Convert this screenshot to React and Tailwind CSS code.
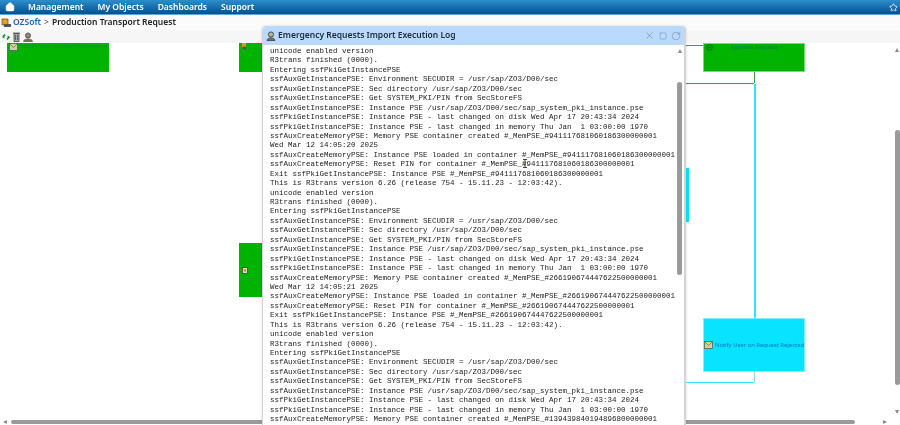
import { Home, Star, X, Square, RotateCw } from 'lucide-react';

const block = (id, date) => [
  'Entering ssfPkiGetInstancePSE',
  'ssfAuxGetInstancePSE: Environment SECUDIR = /usr/sap/ZO3/D00/sec',
  'ssfAuxGetInstancePSE: Sec directory /usr/sap/ZO3/D00/sec',
  'ssfAuxGetInstancePSE: Get SYSTEM_PKI/PIN from SecStoreFS',
  'ssfAuxGetInstancePSE: Instance PSE /usr/sap/ZO3/D00/sec/sap_system_pki_instance.pse',
  'ssfPkiGetInstancePSE: Instance PSE - last changed on disk Wed Apr 17 20:43:34 2024',
  'ssfPkiGetInstancePSE: Instance PSE - last changed in memory Thu Jan  1 03:00:00 1970',
  `ssfAuxCreateMemoryPSE: Memory PSE container created #_MemPSE_#${id}`,
  ...(date
    ? [
        date,
        `ssfAuxCreateMemoryPSE: Instance PSE loaded in container #_MemPSE_#${id}`,
        `ssfAuxCreateMemoryPSE: Reset PIN for container #_MemPSE_#${id}`,
        `Exit ssfPkiGetInstancePSE: Instance PSE #_MemPSE_#${id}`,
        'This is R3trans version 6.26 (release 754 - 15.11.23 - 12:03:42).',
        'unicode enabled version',
        'R3trans finished (0000).',
      ]
    : []),
];

const logLines = [
  'unicode enabled version',
  'R3trans finished (0000).',
  ...block('941117681060186300000001', 'Wed Mar 12 14:05:20 2025'),
  ...block('266190674447622500000001', 'Wed Mar 12 14:05:21 2025'),
  ...block('139439840194896800000001'),
];

const navItems = ['Management', 'My Objects', 'Dashboards', 'Support'];

function MailIcon() {
  return (
    <svg width="9" height="8" viewBox="0 0 9 8" className="shrink-0">
      <rect x="0.5" y="0.5" width="8" height="7" fill="#d8cf9a" stroke="#555" strokeWidth="0.7" />
      <path d="M1 1l3.5 3.5L8 1" fill="none" stroke="#4a8a4a" strokeWidth="0.8" />
    </svg>
  );
}

function ToolbarIcons() {
  return (
    <div className="flex h-[13px] items-center gap-[3px] pl-[2px]">
      <svg width="8" height="10" viewBox="0 0 8 10">
        <path d="M0 5l2.400-3.200 1.200 1.700-1.200.7v2.300zM8 5L5.600 8.200 4.400 6.500l1.200-.7V3.500z" fill="#1f8a2c" />
      </svg>
      <svg width="7" height="10" viewBox="0 0 7 10">
        <rect x="1" y="1.500" width="5" height="8" fill="#a9a9a9" stroke="#444" strokeWidth="0.8" />
        <path d="M0 1h7M2.500 3v5M4.500 3v5" stroke="#444" strokeWidth="0.7" />
      </svg>
      <svg width="10" height="10" viewBox="0 0 10 10">
        <circle cx="5" cy="3.500" r="2.600" fill="#8c8570" stroke="#444" strokeWidth="0.7" />
        <path d="M0.500 9.500c0-3.500 9-3.500 9 0z" fill="#77715f" stroke="#444" strokeWidth="0.6" />
      </svg>
    </div>
  );
}

function Node({ className, children }) {
  return <div className={`absolute flex ${className}`}>{children}</div>;
}

export default function App() {
  return (
    <div className="relative flex h-[425px] w-[900px] flex-col overflow-hidden bg-white font-['Noto_Sans','Liberation_Sans',sans-serif] blur-[0.35px]">
      <header className="flex h-[15px] shrink-0 items-center justify-between border-b border-[#5aa7dc] bg-gradient-to-b from-[#2b8fcb] to-[#04518f] text-white">
        <nav className="flex items-center">
          <Home size={10} fill="white" strokeWidth={2} className="ml-[5px] mr-[13px]" />
          <div className="flex gap-[14px] text-[8.5px] font-semibold leading-none">
            {navItems.map((item) => (
              <span key={item}>{item}</span>
            ))}
          </div>
        </nav>
        <Star size={9} strokeWidth={2} className="mr-[2px]" />
      </header>

      <div className="flex h-[15px] shrink-0 items-center bg-[#fbfbfb] pl-[1px] text-[8.5px] font-semibold leading-none">
        <svg width="11" height="10" viewBox="0 0 11 10" className="mr-[1px]">
          <rect x="1" y="1" width="6" height="6" fill="#e8a020" stroke="#6b4a10" strokeWidth="0.7" />
          <rect x="3" y="6" width="7" height="3" fill="#555" />
        </svg>
        <span className="text-[#1d62b8]">OZSoft</span>
        <span className="mx-[3px] font-normal text-[#444]">&gt;</span>
        <span className="text-[#222]">Production Transport Request</span>
      </div>

      <div className="h-[13px] shrink-0 bg-[#f6f6f6]">
        <ToolbarIcons />
      </div>

      <main className="relative flex-1">
        <Node className="left-[7px] top-0 h-[29px] w-[102px] items-start bg-[#00b300] pl-[2px] text-[5.9px] leading-[7px] text-[#0a8f3a]">
          <MailIcon />
          <span className="ml-[3px] whitespace-nowrap">Notify User on Alert Processing</span>
        </Node>
        <Node className="left-[239px] top-0 h-[29px] w-[30px] items-start bg-[#00b300] pl-[2px]">
          <svg width="7" height="7" viewBox="0 0 7 7">
            <rect x="1" y="0" width="4" height="4" fill="#e8931e" />
            <circle cx="3.500" cy="5" r="1.800" fill="#555" />
          </svg>
        </Node>
        <Node className="left-[239px] top-[200px] h-[54px] w-[30px] items-center bg-[#00b300] pl-[3px]">
          <svg width="6" height="7" viewBox="0 0 6 7">
            <rect x="0.400" y="0.400" width="5.200" height="6.200" fill="#ddd8c0" stroke="#333" strokeWidth="0.7" />
            <rect x="2" y="2.500" width="2" height="2" fill="#c9742a" />
          </svg>
        </Node>
        <Node className="left-[685px] top-[125px] h-[54px] w-[4px] bg-[#08e4ff]" />
        <Node className="left-[703px] top-0 h-[29px] w-[102px] items-start justify-center border border-[#6fe06f] bg-[#00b300] text-[5.9px] leading-[7px] text-[#0a7a5a]">
          <svg width="7" height="7" viewBox="0 0 7 7" className="absolute left-[2px] top-0">
            <circle cx="3.500" cy="3.500" r="2.800" fill="none" stroke="#14503a" strokeWidth="0.8" />
            <path d="M2 3.500h3" stroke="#14503a" strokeWidth="0.7" />
          </svg>
          <span className="whitespace-nowrap">Approve Request</span>
        </Node>
        <Node className="left-[703px] top-[275px] h-[54px] w-[102px] items-center justify-center gap-[2px] border border-[#7ff0ff] bg-[#08e4ff] text-[5.9px] leading-[7px] text-[#0a72c8]">
          <MailIcon />
          <span className="whitespace-nowrap">Notify User on Request Rejected</span>
        </Node>

        {/* connectors */}
        <div className="absolute left-[685px] top-[2px] h-[1px] w-[18px] bg-[#3f9a4f]" />
        <div className="absolute left-[685px] top-[40px] h-[1px] w-[69px] bg-[#3f9a4f]" />
        <div className="absolute left-[754px] top-[29px] h-[11px] w-[1px] bg-[#3f9a4f]" />
        <div className="absolute left-[754px] top-[41px] h-[234px] w-[2px] bg-[#30e4ff]" />
        <div className="absolute left-[754px] top-[329px] h-[10px] w-[1px] bg-[#8fd8e0]" />
        <div className="absolute left-[685px] top-[339px] h-[1px] w-[69px] bg-[#30e4ff]" />

        {/* outer scrollbars */}
        <div className="absolute right-0 top-0 h-[375px] w-[6px]">
          <div className="absolute left-[1px] top-[5px] h-0 w-0 border-x-[2.5px] border-b-[4px] border-x-transparent border-b-[#8a8a8a]" />
          <div className="absolute left-[1px] top-[87px] h-[255px] w-[5px] rounded-[3px] bg-[#9a9a9a]" />
          <div className="absolute left-[1px] top-[367px] h-0 w-0 border-x-[2.5px] border-t-[4px] border-x-transparent border-t-[#8a8a8a]" />
        </div>
        <div className="absolute bottom-0 left-0 h-[6px] w-[900px]">
          <div className="absolute left-[3px] top-[1px] h-0 w-0 border-y-[2.5px] border-r-[4px] border-y-transparent border-r-[#8a8a8a]" />
          <div className="absolute left-[11px] top-[1px] h-[4px] w-[844px] rounded-[2px] bg-[#9a9a9a]" />
          <div className="absolute left-[883px] top-[1px] h-0 w-0 border-y-[2.5px] border-l-[4px] border-y-transparent border-l-[#8a8a8a]" />
        </div>
      </main>

      {/* log window */}
      <section className="absolute left-[262px] top-[26px] flex h-[399px] w-[424px] flex-col overflow-hidden rounded-t-[4px] border-r-2 border-l border-[#d4d4d4] bg-white shadow-[0_0_3px_rgba(0,0,0,0.15)]">
        <div className="flex h-[19px] shrink-0 items-center bg-[#b9d9ff] pl-[3px] pr-[3px]">
          <svg width="10" height="10" viewBox="0 0 10 10" className="mr-[2px]">
            <circle cx="5" cy="3.500" r="2.600" fill="#b8b29a" stroke="#333" strokeWidth="0.8" />
            <path d="M1 9.500c0-3.500 8-3.500 8 0z" fill="#77715f" stroke="#333" strokeWidth="0.7" />
          </svg>
          <span className="text-[8.5px] font-semibold leading-none text-[#1c2a3a]">
            Emergency Requests Import Execution Log
          </span>
          <div className="ml-auto flex items-center gap-[3px] text-[#6f8094]">
            <X size={11} strokeWidth={1.3} />
            <Square size={8} strokeWidth={1.3} className="mx-[1px]" />
            <RotateCw size={10} strokeWidth={1.3} />
          </div>
        </div>
        <div className="relative flex-1 overflow-hidden">
          <pre className="pl-[7px] pt-[2px] font-['Liberation_Mono',monospace] text-[7.5px] leading-[9.43px] text-[#222]">
            {logLines.join('\n')}
          </pre>
          {/* inner scrollbar */}
          <div className="absolute right-[2px] top-[4px] h-0 w-0 border-x-[2.5px] border-b-[4px] border-x-transparent border-b-[#8a8a8a]" />
          <div className="absolute right-[2px] top-[37px] h-[193px] w-[5px] rounded-[3px] bg-[#9a9a9a]" />
          {/* text cursor */}
          <svg width="6" height="9" viewBox="0 0 6 9" className="absolute left-[259px] top-[114px]">
            <path d="M1 .5h4M3 .5v8M1 8.500h4" stroke="#3f4a20" strokeWidth="1" fill="none" />
          </svg>
        </div>
      </section>
    </div>
  );
}
